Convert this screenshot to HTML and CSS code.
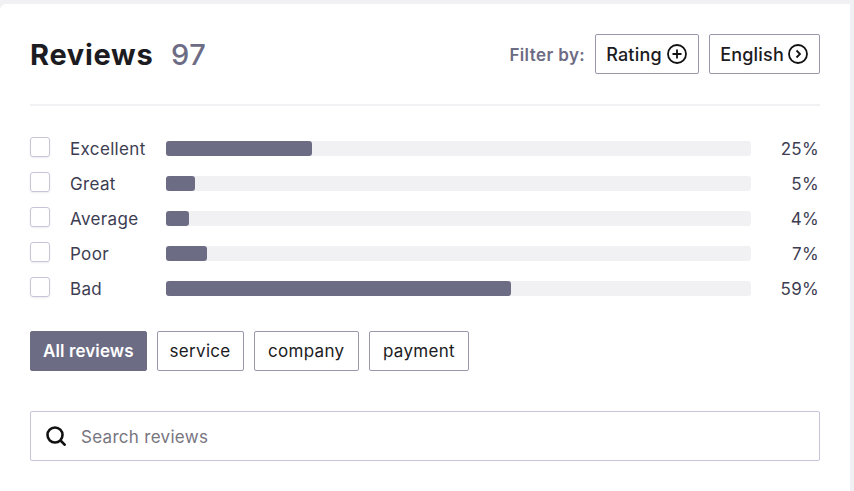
FILE: index.html
```html
<!DOCTYPE html>
<html lang="en">
<head>
  <meta charset="UTF-8" />
  <title>Reviews</title>
  <link rel="stylesheet" href="styles.css">
</head>
<body>
  <div class="card">
    <div class="header">
      <h2>Reviews <span class="count">97</span></h2>
      <div class="filters">
        <span class="filter-label">Filter by:</span>
        <button class="filter-btn">Rating
          <svg class="filter-icon" viewBox="0 0 20 20"><circle cx="10" cy="10" r="9" /><path d="M10 5.5v9M5.5 10h9" /></svg>
        </button>
        <button class="filter-btn">English
          <svg class="filter-icon" viewBox="0 0 20 20"><circle cx="10" cy="10" r="9" /><path d="M8.5 6.5l3.5 3.5-3.5 3.5" /></svg>
        </button>
      </div>
    </div>

    <div class="ratings">
      <div class="rating-row">
        <span class="checkbox"></span>
        <span class="rating-name">Excellent</span>
        <div class="track"><div class="fill" style="width: 25%"></div></div>
        <span class="percent">25%</span>
      </div>
      <div class="rating-row">
        <span class="checkbox"></span>
        <span class="rating-name">Great</span>
        <div class="track"><div class="fill" style="width: 5%"></div></div>
        <span class="percent">5%</span>
      </div>
      <div class="rating-row">
        <span class="checkbox"></span>
        <span class="rating-name">Average</span>
        <div class="track"><div class="fill" style="width: 4%"></div></div>
        <span class="percent">4%</span>
      </div>
      <div class="rating-row">
        <span class="checkbox"></span>
        <span class="rating-name">Poor</span>
        <div class="track"><div class="fill" style="width: 7%"></div></div>
        <span class="percent">7%</span>
      </div>
      <div class="rating-row">
        <span class="checkbox"></span>
        <span class="rating-name">Bad</span>
        <div class="track"><div class="fill" style="width: 59%"></div></div>
        <span class="percent">59%</span>
      </div>
    </div>

    <div class="tags">
      <button class="tag active">All reviews</button>
      <button class="tag tight">service</button>
      <button class="tag wide">company</button>
      <button class="tag">payment</button>
    </div>

    <div class="search">
      <svg class="search-icon" viewBox="0 0 20 20"><circle cx="9" cy="9" r="7.5" /><path d="M14.5 14.5l5 5" /></svg>
      <span class="search-text">Search reviews</span>
    </div>
  </div>
</body>
</html>
```

FILE: styles.css
```css
body {
  font-family: "Inter", "Liberation Sans", sans-serif;
  background-color: #f1f1f3;
  margin: 0;
  padding: 4px 4px 0 0;
  overflow: hidden;
}

.card {
  background: white;
  border-radius: 6px 0 0 0;
  padding: 30px;
  height: 487px;
  box-sizing: border-box;
}

.header {
  display: flex;
  justify-content: space-between;
  align-items: center;
  height: 40px;
  padding-bottom: 30px;
  border-bottom: 2px solid #f1f1f3;
}

h2 {
  margin: 0;
  font-size: 29px;
  font-weight: 700;
  letter-spacing: 0.7px;
  color: #1b1b21;
}

.count {
  margin-left: 10px;
  font-weight: 500;
  color: #6c6c84;
}

.filters {
  display: flex;
  align-items: center;
}

.filter-label {
  font-size: 17px;
  font-weight: 600;
  letter-spacing: 0.4px;
  color: #6c6c84;
  margin: 2px 10px 0 0;
}

.filter-btn {
  display: flex;
  align-items: center;
  justify-content: space-between;
  min-width: 104px;
  gap: 4px;
  height: 40px;
  padding: 0 11px 0 10px;
  margin-left: 10px;
  background: white;
  border: 1px solid #9a98ac;
  border-radius: 2px;
  font-family: inherit;
  font-size: 18px;
  font-weight: 500;
  letter-spacing: 0.2px;
  color: #1b1b21;
}

.filter-btn:first-of-type {
  margin-left: 0;
}

.filter-icon {
  width: 20px;
  height: 20px;
  fill: none;
  stroke: #111;
  stroke-width: 1.8;
}

.ratings {
  margin-top: 25px;
}

.rating-row {
  display: flex;
  align-items: center;
  height: 35px;
}

.checkbox {
  width: 20px;
  height: 20px;
  box-sizing: border-box;
  margin-top: -3px;
  border: 1px solid #c7c5da;
  border-radius: 3px;
  box-shadow: 0 1px 2px rgba(0,0,0,0.08);
}

.rating-name {
  width: 96px;
  margin-left: 20px;
  font-size: 17px;
  letter-spacing: 0.35px;
  color: #3d3d52;
}

.track {
  width: 585px;
  height: 15px;
  background: #f1f1f3;
  border-radius: 3px;
}

.fill {
  height: 100%;
  background: #6c6c84;
  border-radius: 3px;
}

.percent {
  flex: 1;
  text-align: right;
  margin-right: 1px;
  font-size: 17px;
  letter-spacing: 0.3px;
  color: #3d3d52;
}

.tags {
  display: flex;
  gap: 10px;
  margin-top: 25px;
}

.tag {
  height: 40px;
  padding: 0 13px;
  background: white;
  border: 1px solid #9a98ac;
  border-radius: 2px;
  font-family: inherit;
  font-size: 17px;
  letter-spacing: 0.3px;
  color: #1b1b21;
}

.tag.tight {
  padding: 0 12px;
}

.tag.wide {
  padding: 0 13.5px;
}

.tag.active {
  padding: 0 12px;
  background: #6c6c84;
  border-color: #6c6c84;
  color: white;
  font-weight: 600;
  letter-spacing: 0.1px;
}

.search {
  display: flex;
  align-items: center;
  height: 50px;
  box-sizing: border-box;
  margin-top: 40px;
  padding: 0 15px;
  border: 1px solid #c7c5da;
  border-radius: 2px;
}

.search-icon {
  width: 20px;
  height: 20px;
  fill: none;
  stroke: #111;
  stroke-width: 2.6;
}

.search-text {
  margin: 2px 0 0 15px;
  font-size: 17px;
  letter-spacing: 0.3px;
  color: #77757f;
}
```
